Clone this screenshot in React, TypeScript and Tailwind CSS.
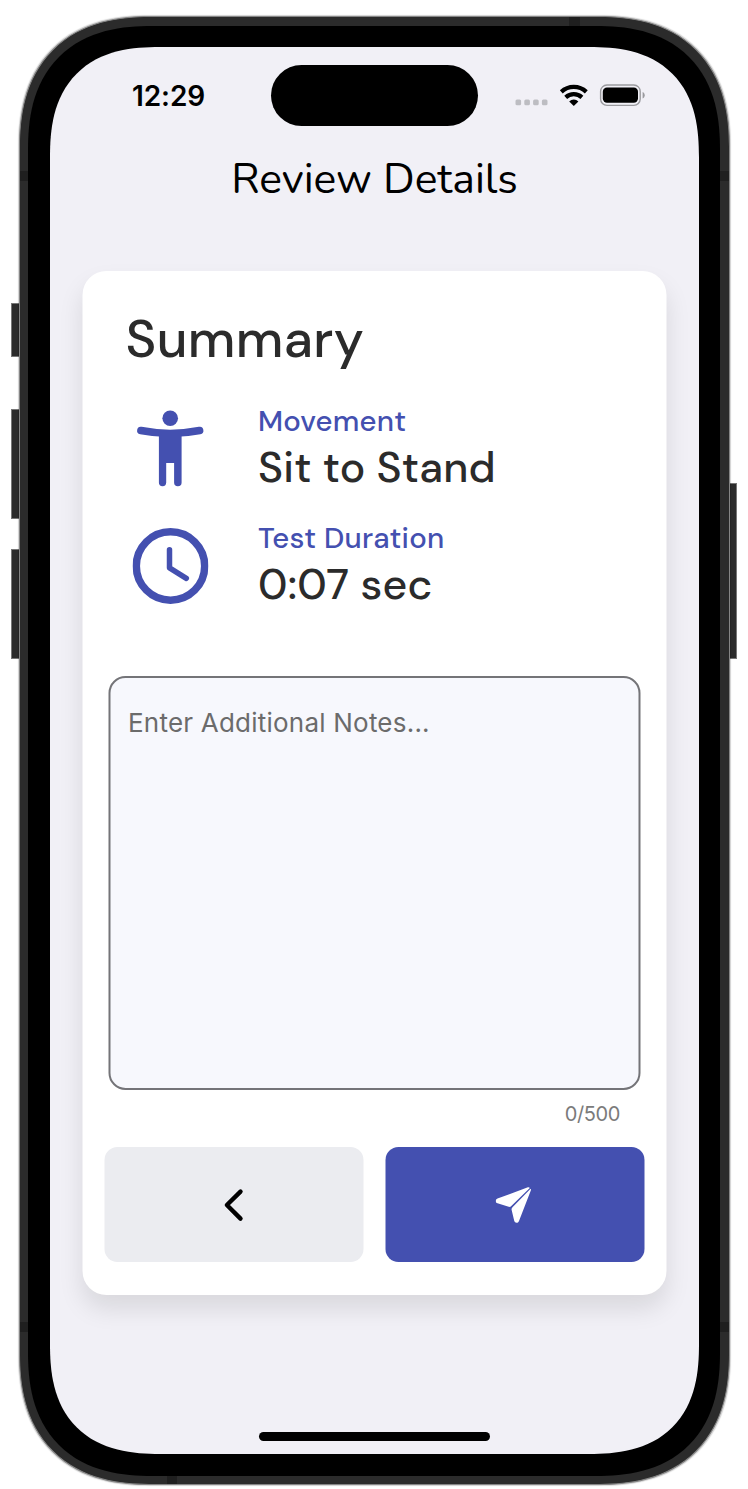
import type { ReactNode } from "react";

function StatusBar() {
  return (
    <header className="flex h-[60px] w-full shrink-0 items-center justify-between">
      <time className="ml-[82px] w-[90px] whitespace-nowrap font-['Inter',sans-serif] text-[28px] leading-none font-semibold tracking-[-0.1px] text-black">
        12:29
      </time>
      <div className="mb-px ml-[49px] h-[61px] w-[207px] shrink-0 rounded-full bg-black" />
      <div className="mr-[54px] ml-auto flex items-center pb-0.5">
        <svg width="130" height="24" viewBox="0 0 130 24" fill="none">
          <g fill="#bdbdc2">
            <rect x="0.5" y="16.6" width="5.6" height="5.6" rx="1.5" />
            <rect x="9.3" y="16.6" width="5.6" height="5.6" rx="1.5" />
            <rect x="18.1" y="16.6" width="5.6" height="5.6" rx="1.5" />
            <rect x="26.9" y="16.6" width="5.6" height="5.6" rx="1.5" />
          </g>
          <g stroke="#000" strokeWidth="4.2">
            <path d="M46.3 8.9a18.3 18.3 0 0 1 25 0" />
            <path d="M50.7 14.4a11.9 11.9 0 0 1 16.2 0" />
          </g>
          <path d="M58.8 22.9l-4.6-4.5a6.8 6.8 0 0 1 9.2 0z" fill="#000" />
          <rect x="85.6" y="2" width="39.6" height="20.4" rx="6.4" stroke="#9a9a9e" strokeWidth="1.4" />
          <rect x="87.8" y="4.6" width="35.2" height="15.2" rx="4.2" fill="#000" />
          <path d="M127.6 8.9c2.8 1.2 2.8 5.4 0 6.6z" fill="#9a9a9e" />
        </svg>
      </div>
    </header>
  );
}

function PersonIcon() {
  return (
    <svg width="76" height="84" viewBox="0 0 76 84" fill="#4450b0">
      <circle cx="37.7" cy="12.3" r="7.8" />
      <path d="M8.4 24.6Q37.7 30.4 67.1 24.6" fill="none" stroke="#4450b0" strokeWidth="7.6" strokeLinecap="round" />
      <path d="M26.4 26h22.7v50.5a3.75 3.75 0 0 1-7.5 0V57h-7.9v19.5a3.65 3.65 0 0 1-7.3 0z" />
    </svg>
  );
}

function ClockIcon() {
  return (
    <svg width="76" height="76" viewBox="0 0 76 76" fill="none" stroke="#4450b0">
      <circle cx="38" cy="38" r="34.2" strokeWidth="7.5" />
      <path d="M37 21.7v18.2l16.8 10.4" strokeWidth="5.5" strokeLinecap="round" strokeLinejoin="round" />
    </svg>
  );
}

function DetailRow({ icon, label, value }: { icon: ReactNode; label: string; value: ReactNode }) {
  return (
    <div className="flex h-[117px] items-start">
      <div className="w-[125.5px] shrink-0 pt-[3px]">{icon}</div>
      <div className="whitespace-nowrap font-['DM_Sans','Inter',sans-serif] font-medium">
        <div className="text-[29.3px] leading-9 tracking-[0.22px] text-[#4450b0]">{label}</div>
        <div className="mt-[3px] text-[42.7px] leading-[52px] tracking-[0.2px] text-[#2b2b2b]">{value}</div>
      </div>
    </div>
  );
}

function SummaryCard() {
  return (
    <main className="mx-auto mt-[62px] flex h-[1024px] w-[584px] -translate-x-[0.5px] flex-col rounded-[24px] bg-white shadow-[0_14px_24px_rgba(0,0,0,0.1)]">
      <h2 className="mt-[36px] ml-[43.5px] h-16 whitespace-nowrap font-['DM_Sans','Inter',sans-serif] text-[52.5px] leading-16 font-medium tracking-[0.35px] text-[#2b2b2b]">
        Summary
      </h2>
      <section className="mt-[32px] ml-[50.5px] flex flex-col">
        <DetailRow icon={<PersonIcon />} label="Movement" value="Sit to Stand" />
        <DetailRow icon={<div className="pt-[5px]"><ClockIcon /></div>} label="Test Duration" value="0:07 sec" />
      </section>
      <textarea
        aria-label="Additional notes"
        placeholder="Enter Additional Notes..."
        className="mx-[26px] mt-[39px] h-[414px] resize-none rounded-[17px] border-2 border-[#747478] bg-[#f7f8fd] px-[18px] pt-[29px] font-['Inter',sans-serif] text-[26px] leading-8 tracking-[0.22px] text-[#6b6b6b] placeholder:text-[#6b6b6b] placeholder:opacity-100"
      />
      <div className="mt-3 mr-[46px] text-right font-['Inter',sans-serif] text-[20px] leading-6 tracking-[-0.4px] text-[#7b7b7b]">
        0/500
      </div>
      <div className="mt-[21px] mr-[21.5px] ml-[22px] grid h-[115px] grid-cols-2 gap-[22px]">
        <button aria-label="Back" className="flex items-center justify-center rounded-[13px] bg-[#ebecf0]">
          <svg width="20" height="34" viewBox="0 0 20 34" fill="none">
            <path d="M17 3.6 3.4 17 17 30.6" stroke="#000" strokeWidth="4.4" strokeLinecap="round" strokeLinejoin="round" />
          </svg>
        </button>
        <button aria-label="Send" className="flex items-center justify-center rounded-[13px] bg-[#4450b0]">
          <svg width="36" height="36" viewBox="0 0 36 36" fill="#fff" className="-translate-x-px">
            <path d="M32.4.3 2 11.5C-.3 12.4-.4 15.6 2 16.3l11.2 3.5c1 .3 1.8.1 2.6-.7L34.3.9Q33.6-.1 32.4.3z" />
            <path d="M35.1 1.7 17 20.3c-1 1-1.1 1.8-.8 3l2.5 10.5c.6 2.6 3.9 2.6 4.8.1L35.4 3.2Q35.7 2.4 35.1 1.7z" />
          </svg>
        </button>
      </div>
    </main>
  );
}

export default function App() {
  return (
    <div className="relative h-[1489px] w-[748px] overflow-hidden bg-white px-[19px] pt-4">
      <div className="absolute top-[303px] left-[10.5px] h-[54px] w-3 border border-[#777] bg-[#2b2b2b]" />
      <div className="absolute top-[409px] left-[10.5px] h-[110px] w-3 border border-[#777] bg-[#2b2b2b]" />
      <div className="absolute top-[549px] left-[10.5px] h-[110px] w-3 border border-[#777] bg-[#2b2b2b]" />
      <div className="absolute top-[483px] right-[11px] h-[176px] w-3 border border-[#777] bg-[#2b2b2b]" />
      <div className="relative h-[1469px] w-[711px] overflow-hidden rounded-[112px] border-[1.5px] border-[#858585] bg-[#2b2b2b] px-2 py-[9px] shadow-[0_0_1px_1px_rgba(0,0,0,0.18)] supports-[corner-shape:squircle]:rounded-[132px] supports-[corner-shape:squircle]:[corner-shape:superellipse(1.25)]">
        <div className="absolute top-0 left-[549px] h-3 w-[11px] bg-[#1f1f1f]" />
        <div className="absolute bottom-0 left-[147px] h-3 w-[10px] bg-[#1f1f1f]" />
        <div className="absolute top-[154px] left-0 h-[10px] w-full bg-[#1f1f1f]" />
        <div className="absolute bottom-[152px] left-0 h-[10px] w-full bg-[#1f1f1f]" />
        <div className="relative h-[1450px] w-[692px] rounded-[104px] bg-black px-[22px] pt-[21px] supports-[corner-shape:squircle]:rounded-[124px] supports-[corner-shape:squircle]:[corner-shape:superellipse(1.27)]">
          <div className="relative flex h-[1407px] w-[649px] flex-col overflow-hidden rounded-[90px] bg-[#f1f0f6] pt-[19px] supports-[corner-shape:squircle]:rounded-[110px] supports-[corner-shape:squircle]:[corner-shape:superellipse(1.32)]">
            <StatusBar />
            <h1 className="mt-[23px] h-[60px] text-center whitespace-nowrap font-['Nunito','Lato',sans-serif] text-[42.7px] leading-[60px] font-normal text-black">
              Review Details
            </h1>
            <SummaryCard />
            <div className="mx-auto mt-[137px] h-[8.5px] w-[231px] shrink-0 rounded-full bg-black" />
          </div>
        </div>
      </div>
    </div>
  );
}
